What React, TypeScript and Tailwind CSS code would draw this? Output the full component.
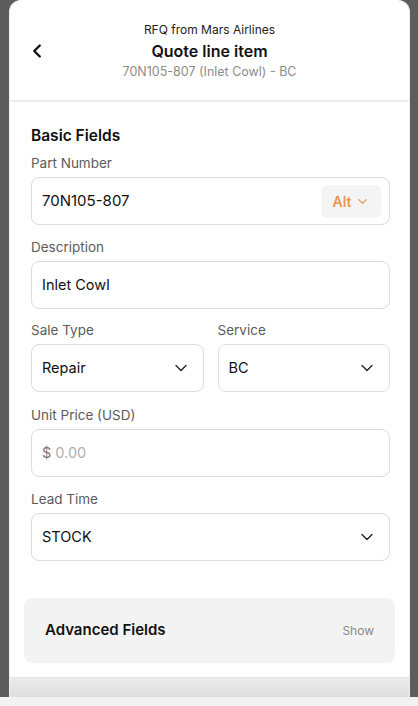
import React from "react";
import { ChevronDown, ChevronLeft } from "lucide-react";

function Label({ children }: { children: React.ReactNode }) {
  return <div className="text-[13.5px] leading-[20px] text-[#5b5b5b] mb-[4px]">{children}</div>;
}

function Box({ children, className = "" }: { children: React.ReactNode; className?: string }) {
  return (
    <div
      className={
        "h-[48px] rounded-[8px] border border-[#dcdcdc] bg-white flex items-center pl-[10px] pr-[8px] " + className
      }
    >
      {children}
    </div>
  );
}

function Select({ value }: { value: string }) {
  return (
    <Box className="justify-between pr-[12px]">
      <span className="text-[14.5px] text-[#111]">{value}</span>
      <ChevronDown size={20} strokeWidth={1.6} className="text-[#222]" />
    </Box>
  );
}

export default function App() {
  return (
    <div
      className="w-[418px] h-[706px] bg-[#5d5d5d] overflow-hidden flex flex-col"
      style={{ fontFamily: "Inter, 'Noto Sans', sans-serif" }}
    >
      <div className="flex-1 mx-[9px] w-[401px] bg-white rounded-t-[12px] flex flex-col border-l border-r border-[#eeeeee]">
        {/* header */}
        <div className="relative h-[102px] flex flex-col items-center pt-[21px] border-b-2 border-[#ececec]">
          <div className="text-[12px] leading-[18px] text-[#222]">RFQ from Mars Airlines</div>
          <div className="text-[16px] leading-[22px] font-semibold text-[#111] mt-[1px]">Quote line item</div>
          <div className="text-[12.5px] leading-[18px] text-[#8c8c8c] mt-[1px]">70N105-807 (Inlet Cowl) - BC</div>
          <ChevronLeft
            size={22}
            strokeWidth={2.6}
            className="absolute left-[16px] top-[40px] text-[#111]"
          />
        </div>

        {/* body */}
        <div className="pl-[21px] pr-[19px] pt-[23px] flex flex-col">
          <div className="text-[15.5px] leading-[22px] font-semibold text-[#111] mb-[6px]">Basic Fields</div>

          <Label>Part Number</Label>
          <Box className="justify-between pr-[7px]">
            <span className="text-[15px] text-[#111]">70N105-807</span>
            <div className="h-[33px] w-[60px] rounded-[6px] bg-[#f4f4f4] flex items-center justify-center gap-[3px]">
              <span className="text-[14px] font-semibold text-[#e9954f]">Alt</span>
              <ChevronDown size={15} strokeWidth={2} className="text-[#e9954f]" />
            </div>
          </Box>

          <div className="mt-[12px]">
            <Label>Description</Label>
            <Box>
              <span className="text-[14.5px] text-[#111]">Inlet Cowl</span>
            </Box>
          </div>

          <div className="mt-[11px] grid grid-cols-2 gap-[14px]">
            <div>
              <Label>Sale Type</Label>
              <Select value="Repair" />
            </div>
            <div>
              <Label>Service</Label>
              <Select value="BC" />
            </div>
          </div>

          <div className="mt-[13px]">
            <Label>Unit Price (USD)</Label>
            <Box>
              <span className="text-[14.5px] text-[#777]">$</span>
              <span className="text-[14.5px] text-[#b0b0b0] ml-[4px]">0.00</span>
            </Box>
          </div>

          <div className="mt-[12px]">
            <Label>Lead Time</Label>
            <Select value="STOCK" />
          </div>
        </div>

        <div className="mx-[14px] mt-[37px] h-[65px] rounded-[8px] bg-[#f3f3f3] flex items-center justify-between pl-[21px] pr-[21px]">
          <span className="text-[15px] font-semibold text-[#111]">Advanced Fields</span>
          <span className="text-[12px] text-[#8a8a8a]">Show</span>
        </div>

        <div className="mt-[14px] flex-1 bg-gradient-to-b from-[#ececec] to-[#dedede] border-t border-[#e2e2e2]" />
      </div>
      <div className="h-[9px] bg-[#f2f2f2]" />
    </div>
  );
}
